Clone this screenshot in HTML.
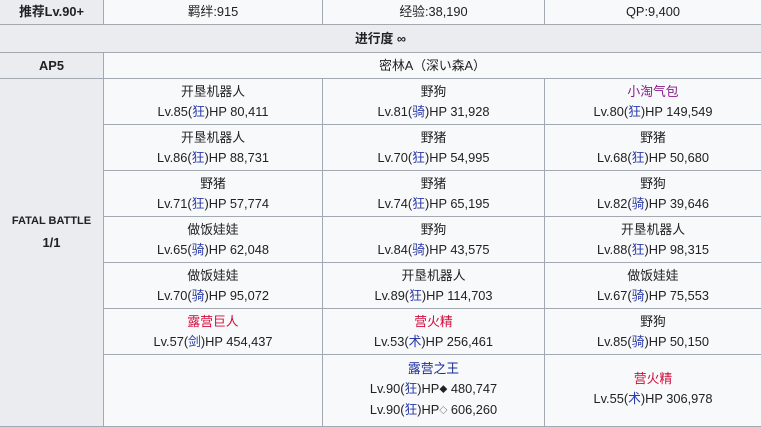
<!DOCTYPE html><html><head><meta charset="utf-8"><style>
body{margin:0;background:#fff;width:761px;height:420px;overflow:hidden;font-family:"Liberation Sans","Noto Sans CJK SC",sans-serif;font-size:12.8px;color:#202122}
table{border-collapse:collapse;table-layout:fixed;width:762px;margin:-1px 0 0 -1px}
td{border:1px solid #a2a9b1;text-align:center;background:#f8f9fa;padding:0;line-height:20px;vertical-align:middle}
.h{background:#eaecf0;font-weight:bold}
.r{color:#d10a3a}.b{color:#1a2a9a}.p{color:#8a1a8a}
.c{color:#2a3aa8}
.d{font-size:8px;vertical-align:1px}
</style></head><body><table>
<col style="width:104px"><col style="width:219px"><col style="width:222px"><col style="width:217px">
<tr style="height:25px"><td class="h">推荐Lv.90+</td><td>羁绊:915</td><td>经验:38,190</td><td>QP:9,400</td></tr>
<tr style="height:28px"><td class="h" colspan="4">进行度 ∞</td></tr>
<tr style="height:26px"><td class="h">AP5</td><td colspan="3">密林A（深い森A）</td></tr>
<tr style="height:46px"><td class="h" rowspan="7" style="font-size:11px;line-height:22px;vertical-align:middle"><div style="margin-bottom:40px">FATAL BATTLE<br><span style="font-size:13px">1/1</span></div></td><td>开垦机器人<br>Lv.85(<span class="c">狂</span>)HP 80,411</td><td>野狗<br>Lv.81(<span class="c">骑</span>)HP 31,928</td><td><span class="p">小淘气包</span><br>Lv.80(<span class="c">狂</span>)HP 149,549</td></tr>
<tr style="height:46px"><td>开垦机器人<br>Lv.86(<span class="c">狂</span>)HP 88,731</td><td>野猪<br>Lv.70(<span class="c">狂</span>)HP 54,995</td><td>野猪<br>Lv.68(<span class="c">狂</span>)HP 50,680</td></tr>
<tr style="height:46px"><td>野猪<br>Lv.71(<span class="c">狂</span>)HP 57,774</td><td>野猪<br>Lv.74(<span class="c">狂</span>)HP 65,195</td><td>野狗<br>Lv.82(<span class="c">骑</span>)HP 39,646</td></tr>
<tr style="height:46px"><td>做饭娃娃<br>Lv.65(<span class="c">骑</span>)HP 62,048</td><td>野狗<br>Lv.84(<span class="c">骑</span>)HP 43,575</td><td>开垦机器人<br>Lv.88(<span class="c">狂</span>)HP 98,315</td></tr>
<tr style="height:46px"><td>做饭娃娃<br>Lv.70(<span class="c">骑</span>)HP 95,072</td><td>开垦机器人<br>Lv.89(<span class="c">狂</span>)HP 114,703</td><td>做饭娃娃<br>Lv.67(<span class="c">骑</span>)HP 75,553</td></tr>
<tr style="height:46px"><td><span class="r">露营巨人</span><br>Lv.57(<span class="c">剑</span>)HP 454,437</td><td><span class="r">营火精</span><br>Lv.53(<span class="c">术</span>)HP 256,461</td><td>野狗<br>Lv.85(<span class="c">骑</span>)HP 50,150</td></tr>
<tr style="height:72px"><td></td><td style="vertical-align:top;padding-top:4px"><span class="b">露营之王</span><br>Lv.90(<span class="c">狂</span>)HP<span class="d">◆</span> 480,747<br>Lv.90(<span class="c">狂</span>)HP<span class="d">◇</span> 606,260</td><td style="vertical-align:top;padding-top:14px"><span class="r">营火精</span><br>Lv.55(<span class="c">术</span>)HP 306,978</td></tr>
</table></body></html>
